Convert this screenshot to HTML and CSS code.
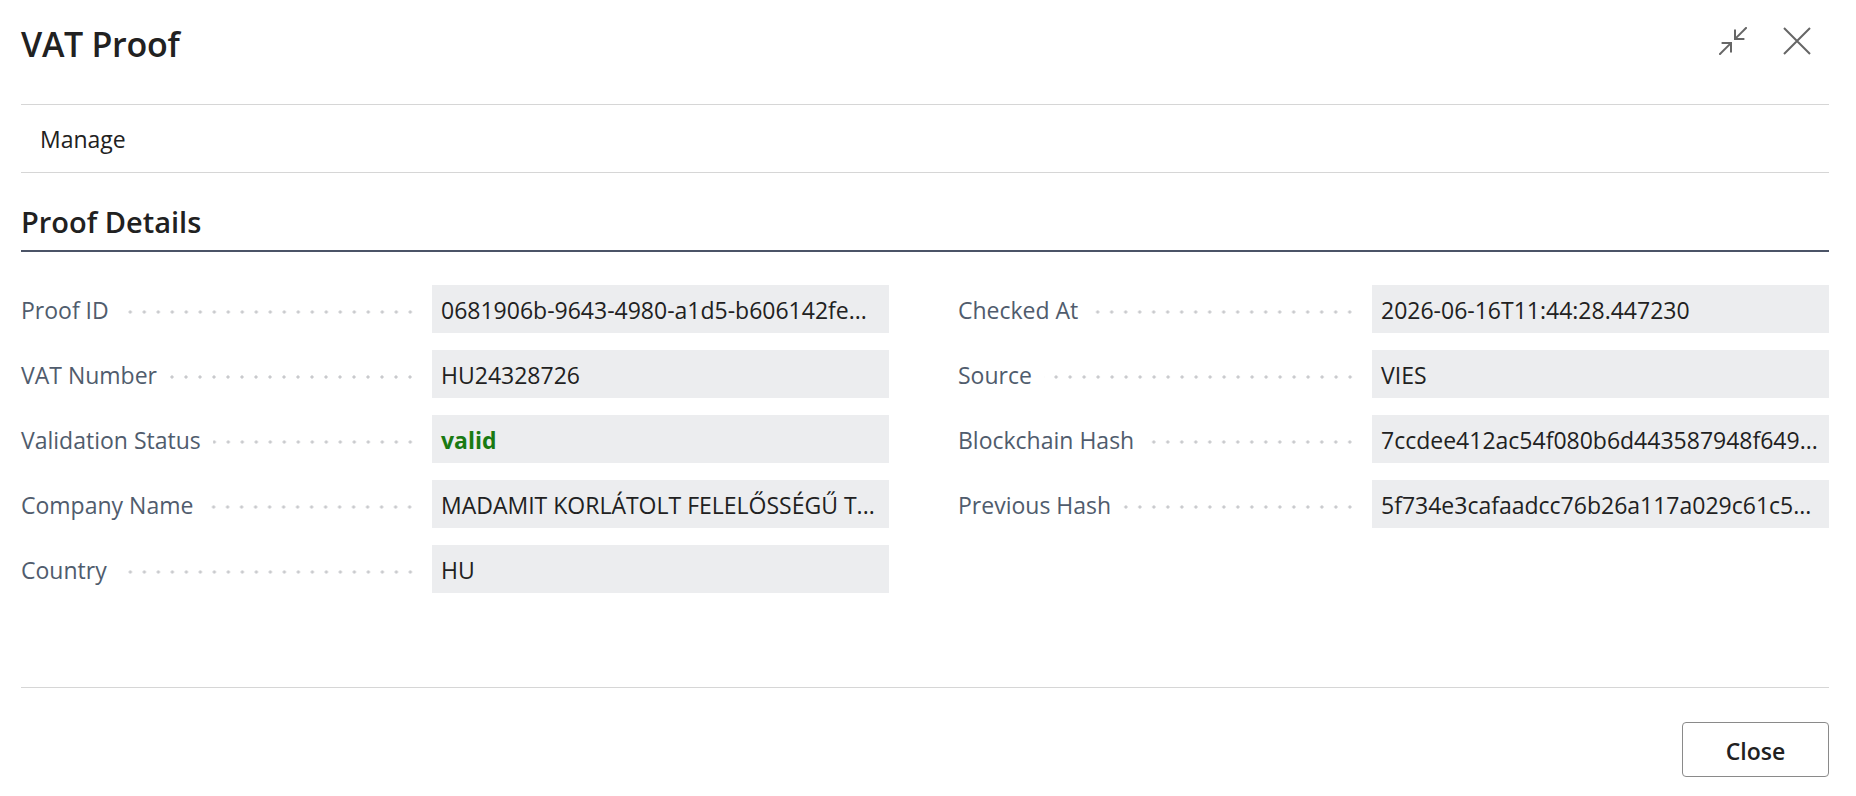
FILE: index.html
```html
<!DOCTYPE html>
<html lang="en">
<head>
<meta charset="utf-8">
<title>VAT Proof</title>
<link rel="stylesheet" href="styles.css">
</head>
<body>
<div class="dialog">
  <header class="dlg-header">
    <h1 class="dlg-title">VAT Proof</h1>
    <div class="dlg-tools">
      <button class="icon-btn" aria-label="Collapse">
        <svg width="28" height="28" viewBox="0 0 28 28" fill="none" stroke="currentColor" stroke-width="2" stroke-linecap="square">
          <path d="M27 1 L16.3 11.7"/>
          <path d="M16 3.6 V12 H24.4"/>
          <path d="M1 27 L11.7 16.3"/>
          <path d="M3.6 16 H12 V24.4"/>
        </svg>
      </button>
      <button class="icon-btn" aria-label="Close">
        <svg width="28" height="28" viewBox="0 0 28 28" fill="none" stroke="currentColor" stroke-width="2">
          <path d="M1 1 L27 27 M27 1 L1 27"/>
        </svg>
      </button>
    </div>
  </header>

  <nav class="action-bar">
    <span class="action">Manage</span>
  </nav>

  <section class="group">
    <h2 class="group-title">Proof Details</h2>
    <div class="fields">
      <div class="col">
        <div class="field">
          <span class="label">Proof ID</span><span class="leader"></span>
          <span class="value">0681906b-9643-4980-a1d5-b606142fe...</span>
        </div>
        <div class="field">
          <span class="label">VAT Number</span><span class="leader"></span>
          <span class="value">HU24328726</span>
        </div>
        <div class="field">
          <span class="label">Validation Status</span><span class="leader"></span>
          <span class="value status-valid">valid</span>
        </div>
        <div class="field">
          <span class="label">Company Name</span><span class="leader"></span>
          <span class="value">MADAMIT KORLÁTOLT FELELŐSSÉGŰ T...</span>
        </div>
        <div class="field">
          <span class="label">Country</span><span class="leader"></span>
          <span class="value">HU</span>
        </div>
      </div>
      <div class="col">
        <div class="field">
          <span class="label">Checked At</span><span class="leader"></span>
          <span class="value">2026-06-16T11:44:28.447230</span>
        </div>
        <div class="field">
          <span class="label">Source</span><span class="leader"></span>
          <span class="value">VIES</span>
        </div>
        <div class="field">
          <span class="label">Blockchain Hash</span><span class="leader"></span>
          <span class="value">7ccdee412ac54f080b6d443587948f649...</span>
        </div>
        <div class="field">
          <span class="label">Previous Hash</span><span class="leader"></span>
          <span class="value">5f734e3cafaadcc76b26a117a029c61c5...</span>
        </div>
      </div>
    </div>
  </section>

  <footer class="dlg-footer">
    <button class="btn">Close</button>
  </footer>
</div>
</body>
</html>
```

FILE: styles.css
```css
* { box-sizing: border-box; }

html, body {
  margin: 0;
  padding: 0;
  background: #ffffff;
}

body {
  font-family: "Open Sans", "Noto Sans", "DejaVu Sans", sans-serif;
  color: #212121;
  font-size: 23px;
}

.dialog {
  padding: 0 27px 0 21px;
}

/* header */
.dlg-header {
  height: 105px;
  display: flex;
  justify-content: space-between;
  align-items: flex-start;
  border-bottom: 1px solid #d6d6d6;
}

.dlg-title {
  margin: 0;
  padding-top: 21px;
  font-size: 34px;
  line-height: 46px;
  font-weight: 600;
  color: #212121;
  letter-spacing: -0.3px;
}

.dlg-tools {
  display: flex;
  gap: 36px;
  padding-top: 27px;
  margin-right: 18px;
}

.icon-btn {
  width: 28px;
  height: 28px;
  padding: 0;
  border: 0;
  background: transparent;
  color: #666666;
  display: block;
}

.icon-btn svg { display: block; }

/* action bar */
.action-bar {
  height: 68px;
  border-bottom: 1px solid #d6d6d6;
  display: flex;
  align-items: center;
  padding-left: 19px;
}

.action {
  font-size: 23px;
  line-height: 67px;
  padding-top: 2px;
  color: #212121;
}

/* group */
.group-title {
  margin: 0;
  padding: 29px 0 8px;
  font-size: 29px;
  line-height: 40px;
  font-weight: 600;
  color: #212121;
  border-bottom: 2px solid #4b5467;
}

.fields {
  display: grid;
  grid-template-columns: 868px 1fr;
  column-gap: 69px;
  padding-top: 33px;
}

.col {
  display: flex;
  flex-direction: column;
  gap: 17px;
}

.field {
  display: grid;
  grid-template-columns: auto 1fr 457px;
  height: 48px;
}

.label {
  font-size: 23px;
  line-height: 46px;
  padding-top: 2px;
  color: #505c6d;
  white-space: nowrap;
}

.leader {
  align-self: center;
  height: 6px;
  margin: 5px 15px 0 12px;
  background-image: radial-gradient(circle, #c9cacd 1.4px, rgba(201, 202, 205, 0) 1.8px);
  background-size: 14px 6px;
  background-repeat: repeat-x;
  background-position: right center;
}

.value {
  background: #ecedef;
  padding: 2px 9px 0;
  font-size: 23px;
  line-height: 46px;
  color: #212121;
  white-space: nowrap;
  overflow: hidden;
  text-overflow: ellipsis;
}

.status-valid {
  color: #1a7a12;
  font-weight: 700;
}

/* footer */
.dlg-footer {
  margin-top: 94px;
  border-top: 1px solid #d6d6d6;
  padding-top: 34px;
  display: flex;
  justify-content: flex-end;
}

.btn {
  width: 147px;
  height: 55px;
  border: 1px solid #8a8a8a;
  border-radius: 4px;
  background: #ffffff;
  font-family: "Open Sans", "Noto Sans", sans-serif;
  font-size: 23px;
  font-weight: 600;
  color: #212121;
  padding: 2px 0 0;
}
```
